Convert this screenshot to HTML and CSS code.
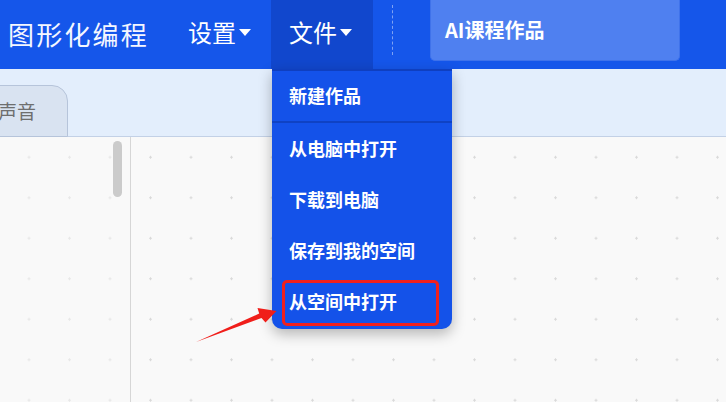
FILE: index.html
```html
<!DOCTYPE html>
<html lang="zh-CN">
<head>
<meta charset="utf-8">
<title>图形化编程</title>
<link rel="stylesheet" href="styles.css">
</head>
<body>
<div class="page">
  <header class="topbar">
    <div class="brand">图形化编程</div>
    <div class="nav-item nav-settings"><span>设置</span><i class="caret"></i></div>
    <div class="nav-item nav-file active"><span>文件</span><i class="caret"></i></div>
    <div class="divider"></div>
    <div class="ai-btn">AI课程作品</div>
  </header>
  <div class="tabbar">
    <div class="tab">声音</div>
  </div>
  <main class="workspace">
    <div class="palette">
      <div class="scroll-thumb"></div>
    </div>
    <div class="canvas"></div>
  </main>

  <div class="dropdown">
    <div class="menu-item first">新建作品</div>
    <div class="menu-item">从电脑中打开</div>
    <div class="menu-item">下载到电脑</div>
    <div class="menu-item">保存到我的空间</div>
    <div class="menu-item">从空间中打开</div>
  </div>
  <div class="highlight"></div>
  <svg class="arrow" width="726" height="402" viewBox="0 0 726 402">
    <polygon points="196,342 261.5,318 265.5,322.5 276.5,311 257.5,308 259.2,313.6" fill="#f01e1a"/>
  </svg>
</div>
</body>
</html>
```
FILE: styles.css
```css
* { box-sizing: border-box; }
html, body {
  margin: 0;
  padding: 0;
  width: 726px;
  height: 402px;
  overflow: hidden;
  font-family: "Noto Sans CJK SC", "Noto Sans", sans-serif;
}
.page {
  position: relative;
  width: 726px;
  height: 402px;
  display: flex;
  flex-direction: column;
  background: #f9f9f9;
}
.topbar {
  height: 69px;
  flex: none;
  background: #1556ea;
  display: flex;
  align-items: stretch;
  color: #fff;
}
.brand {
  display: flex;
  align-items: center;
  padding-left: 8px;
  width: 172px;
  font-size: 26px;
  letter-spacing: 2.2px;
  color: #f4f7ff;
  padding-bottom: 2px;
}
.nav-item {
  display: flex;
  align-items: center;
  font-size: 24px;
  padding-bottom: 6px;
}
.nav-settings {
  width: 99px;
  padding-left: 16px;
}
.nav-file {
  width: 102px;
  padding-left: 18px;
}
.nav-item.active {
  background: #1147cd;
}
.caret {
  display: inline-block;
  width: 0;
  height: 0;
  margin-left: 3px;
  margin-top: 2px;
  border-left: 6px solid transparent;
  border-right: 6px solid transparent;
  border-top: 7px solid #fff;
}
.divider {
  width: 1px;
  margin: 5px 0 14px 19px;
  border-left: 1px dashed rgba(255, 255, 255, 0.45);
}
.ai-btn {
  margin-left: 37px;
  width: 250px;
  height: 61px;
  background: #4f80f0;
  border: 1px solid #3f72ea;
  border-top: none;
  border-radius: 0 0 5px 5px;
  display: flex;
  align-items: center;
  padding-left: 14px;
  padding-bottom: 2px;
  font-size: 20px;
  font-weight: 700;
  color: #fff;
}
.tabbar {
  height: 68px;
  flex: none;
  background: #e3eefc;
  border-bottom: 1px solid #c3d1e6;
  display: flex;
  align-items: flex-end;
}
.tab {
  margin-left: -24px;
  width: 92px;
  height: 52px;
  margin-bottom: -1px;
  background: #d9e3f1;
  border: 1px solid #b6c4da;
  border-radius: 0 16px 0 0;
  font-size: 19px;
  color: #6e6e6e;
  display: flex;
  align-items: center;
  padding-left: 21px;
  padding-bottom: 2px;
}
.workspace {
  flex: 1;
  display: flex;
  background-image: radial-gradient(circle, #dadada 1.1px, transparent 1.4px);
  background-size: 40.5px 40.5px;
  background-position: 8.75px 0;
}
.palette {
  width: 131px;
  flex: none;
  border-right: 1px solid #d6d6d6;
  position: relative;
  background-color: rgba(249, 249, 249, 0.45);
  padding: 4px 0 0 113px;
}
.scroll-thumb {
  width: 9px;
  height: 56px;
  border-radius: 5px;
  background: #cbcbcb;
}
.canvas {
  flex: 1;
}
.dropdown {
  position: absolute;
  left: 272px;
  top: 69px;
  width: 180px;
  height: 260px;
  background: #1452e9;
  border-top: 2px solid #0f3fbf;
  border-radius: 0 0 10px 10px;
  box-shadow: 0 5px 14px rgba(0, 0, 0, 0.28);
  display: flex;
  flex-direction: column;
}
.menu-item {
  height: 51px;
  display: flex;
  align-items: center;
  padding-left: 17px;
  font-size: 18px;
  font-weight: 700;
  color: #fff;
  padding-bottom: 2px;
}
.menu-item.first {
  height: 52px;
  border-bottom: 2px solid #0f42c4;
}
.highlight {
  position: absolute;
  left: 282px;
  top: 280px;
  width: 157px;
  height: 46px;
  border: 3px solid #f1201d;
  border-radius: 5px;
}
.arrow {
  position: absolute;
  left: 0;
  top: 0;
  pointer-events: none;
}
```
